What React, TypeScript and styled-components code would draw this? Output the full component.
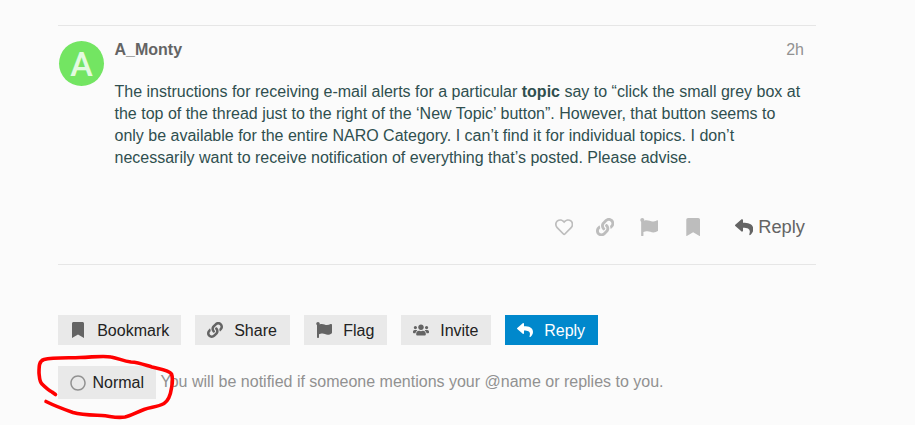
import React from "react";
import styled, { createGlobalStyle } from "styled-components";
import { FaBookmark, FaFlag, FaLink, FaRegCircle, FaRegHeart, FaReply, FaUsers } from "react-icons/fa";

const GlobalStyle = createGlobalStyle`
  * { box-sizing: border-box; }
  body { margin: 0; background: #fbfbfb; overflow: hidden; }
  button { font: inherit; border: 0; padding: 0; margin: 0; cursor: pointer; }
`;

const Page = styled.main`
  position: relative;
  width: 915px;
  height: 425px;
  padding: 25px 0 0 58px;
  background: #fbfbfb;
  font: 16px/22px "Liberation Sans", Arial, sans-serif;
`;

const Post = styled.article`
  display: flex;
  gap: 10.5px;
  width: 758px;
  height: 240px;
  padding: 15px 0 0 1px;
  border-top: 1px solid #e6e6e6;
  border-bottom: 1px solid #e6e6e6;
`;

const Avatar = styled.div`
  flex: none;
  width: 45px;
  height: 45px;
  border-radius: 50%;
  background: #73e562;
  color: #e3fae0;
  font: 500 34px/47px Roboto, sans-serif;
  text-align: center;
`;

const PostMain = styled.div`
  flex: 1;
  display: flex;
  flex-direction: column;
`;

const PostHeader = styled.header`
  display: flex;
  justify-content: space-between;
  height: 40px;
  padding: 0 12px 0 0;
  line-height: 17px;
`;

const Author = styled.span`
  color: #646464;
  font-weight: bold;
`;

const Age = styled.time`
  color: #919191;
`;

const Cooked = styled.p`
  margin: 0;
  color: #2f4f4f;
  white-space: nowrap;
`;

const PostControls = styled.nav`
  display: flex;
  align-items: center;
  justify-content: flex-end;
  height: 30px;
  margin-top: 43px;
  padding-right: 11px;
`;

const Control = styled.button<{ $width?: number }>`
  display: flex;
  align-items: center;
  justify-content: center;
  width: ${(p) => p.$width ?? 44}px;
  height: 30px;
  background: none;
  color: #bdbdbd;
  font-size: 18.3px;
`;

const ReplyControl = styled(Control)`
  width: auto;
  gap: 5px;
  margin-left: 20px;
  color: #646464;
`;

const Actions = styled.div`
  display: flex;
  gap: 14px;
  margin-top: 50px;
`;

const ActionButton = styled.button<{ $width: number; $primary?: boolean }>`
  display: flex;
  align-items: center;
  width: ${(p) => p.$width}px;
  height: 30px;
  padding: 1px 0 0 12px;
  background: ${(p) => (p.$primary ? "#0088cc" : "#e9e9e9")};
  color: ${(p) => (p.$primary ? "#fff" : "#222")};
  line-height: 24px;
  white-space: nowrap;

  svg {
    flex: none;
    width: 16px;
    margin: -1px 11.2px 0 0;
    color: ${(p) => (p.$primary ? "#fff" : "#646464")};
  }
`;

const Notifications = styled.div`
  display: flex;
  align-items: center;
  gap: 4.5px;
  margin-top: 21px;
  color: #919191;
`;

const LevelButton = styled.button`
  display: flex;
  align-items: center;
  gap: 6.5px;
  width: 98px;
  height: 33px;
  padding-left: 12px;
  background: #e9e9e9;
  color: #222;

  svg { color: #919191; }
`;

const Reason = styled.span`
  padding-bottom: 2px;
`;

const Marker = styled.svg`
  position: absolute;
  left: 30px;
  top: 345px;
  width: 160px;
  height: 80px;
  pointer-events: none;
`;

const actions = [
  { label: "Bookmark", Icon: FaBookmark, width: 123 },
  { label: "Share", Icon: FaLink, width: 95 },
  { label: "Flag", Icon: FaFlag, width: 83 },
  { label: "Invite", Icon: FaUsers, width: 90 },
  { label: "Reply", Icon: FaReply, width: 93, primary: true },
];

export default function App() {
  return (
    <>
      <GlobalStyle />
      <Page>
        <Post>
          <Avatar>A</Avatar>
          <PostMain>
            <PostHeader>
              <Author>A_Monty</Author>
              <Age>2h</Age>
            </PostHeader>
            <Cooked>
              The instructions for receiving e-mail alerts for a particular <strong>topic</strong> say to “click the small grey box at<br />
              the top of the thread just to the right of the ‘New Topic’ button”. However, that button seems to<br />
              only be available for the entire NARO Category. I can’t find it for individual topics. I don’t<br />
              necessarily want to receive notification of everything that’s posted. Please advise.
            </Cooked>
            <PostControls>
              <Control $width={38} aria-label="Like"><FaRegHeart /></Control>
              <Control aria-label="Copy link"><FaLink /></Control>
              <Control aria-label="Flag post"><FaFlag /></Control>
              <Control aria-label="Bookmark post"><FaBookmark /></Control>
              <ReplyControl><FaReply />Reply</ReplyControl>
            </PostControls>
          </PostMain>
        </Post>
        <Actions>
          {actions.map(({ label, Icon, width, primary }) => (
            <ActionButton key={label} $width={width} $primary={primary}>
              <Icon />
              {label}
            </ActionButton>
          ))}
        </Actions>
        <Notifications>
          <LevelButton><FaRegCircle />Normal</LevelButton>
          <Reason>You will be notified if someone mentions your @name or replies to you.</Reason>
        </Notifications>
        <Marker viewBox="0 0 160 80" fill="none" stroke="#ff0000" strokeWidth="3.6" strokeLinecap="round" strokeLinejoin="round">
          <path d="M25.500 49.500 L22 47 C18 45 15 42 12 39 C9.500 37 9.500 33 9 28 C9 21 9 16 14 14.500 C22 12.500 38 13 50 12.500 C64 12 74 10.500 81 12 C89 13.500 93 16 101 17 C109 17.500 115 20 122 22 C130 24 139 25 141.500 29 C143 33 142.500 38 141.500 43 C140.500 50 138 56 134 58.500 C128 62 121 62 114 64.500 C107 67 100 71 95 72 C86 73.500 80 71 72 70.500 C62 70 52 70 43 67.500 C33 64 23 60 16 56.500" />
        </Marker>
      </Page>
    </>
  );
}
